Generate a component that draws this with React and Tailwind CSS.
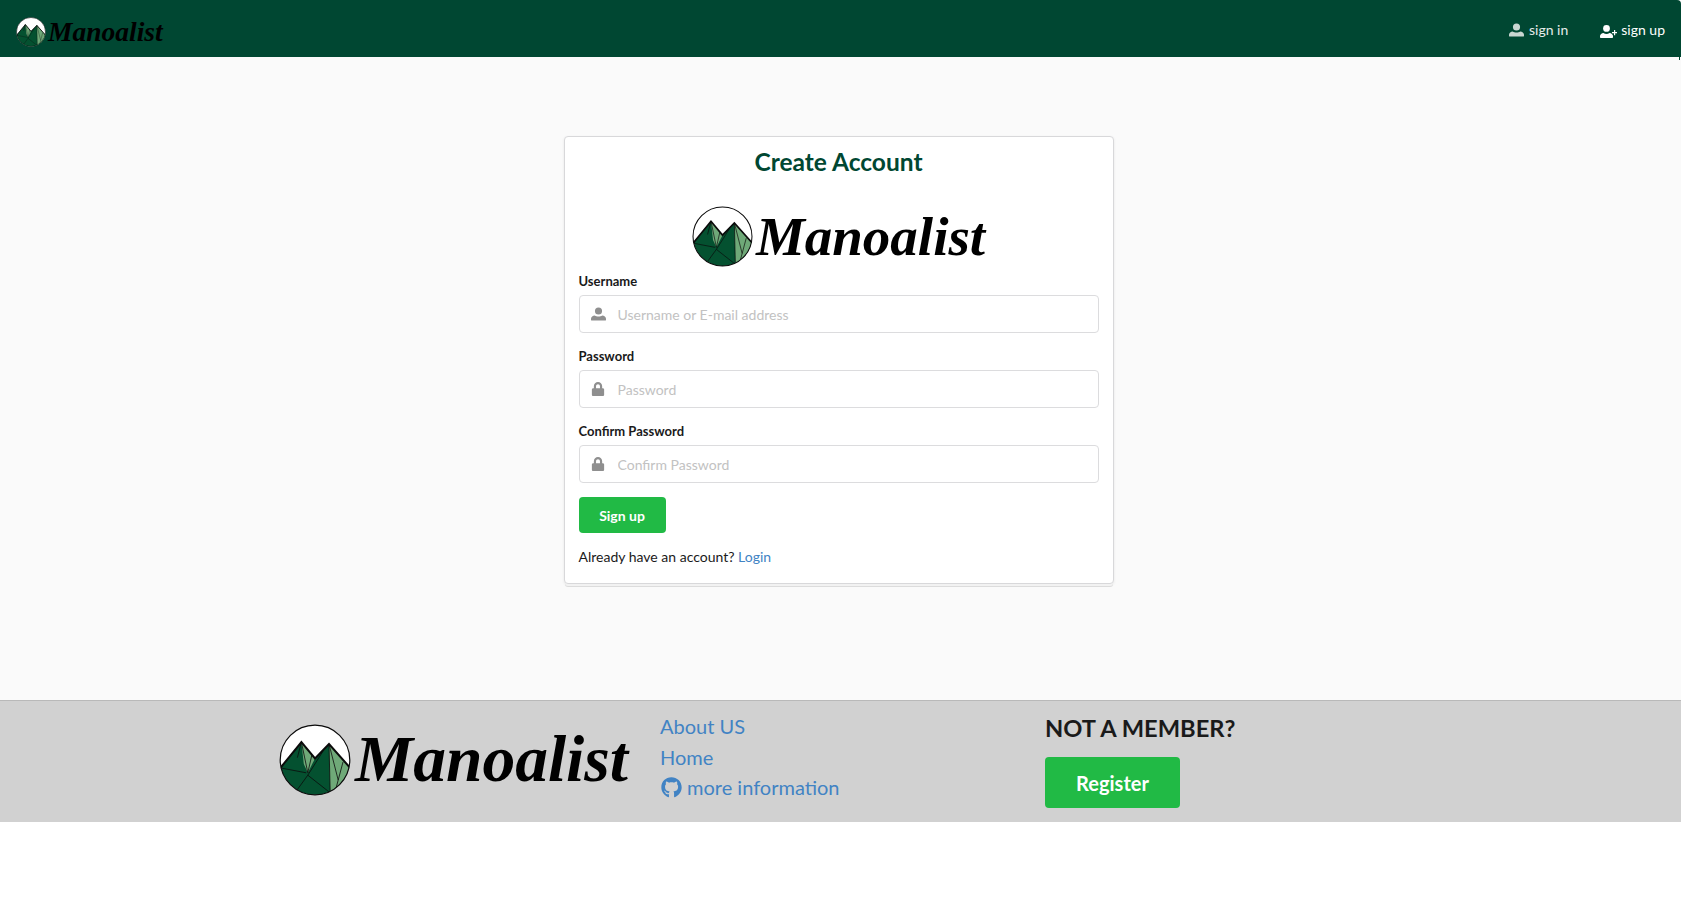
import { FaLock, FaGithub } from 'react-icons/fa';

function UserIcon({ className }) {
  return (
    <svg width="15" height="14" viewBox="0 0 16 14" fill="currentColor" className={className}>
      <circle cx="8" cy="3.8" r="3.8" />
      <path d="M1 14a1 1 0 0 1-1-1v-1c0-2 2-3.5 4-3.5 1 .8 2.5 1.2 4 1.2s3-.4 4-1.2c2 0 4 1.5 4 3.5v1a1 1 0 0 1-1 1z" />
    </svg>
  );
}

function UserPlusIcon({ className }) {
  return (
    <svg width="17" height="13" viewBox="0 0 17 13" fill="currentColor" className={className}>
      <circle cx="6.5" cy="3.4" r="3.4" />
      <path d="M.8 13a.8.8 0 0 1-.8-.8v-1.1c0-1.8 1.7-3.2 3.5-3.2.9.7 1.9 1 3 1s2.1-.3 3-1c1.8 0 3.5 1.4 3.5 3.2v1.1a.8.8 0 0 1-.8.8z" />
      <path d="M14 5v2h-2v1.2h2v2h1.2v-2H17V7h-1.8V5z" />
    </svg>
  );
}

function Mountains({ size }) {
  return (
    <svg width={size} height={size} viewBox="0 0 180 180" className="shrink-0">
      <defs>
        <clipPath id={`disc-${size}`}>
          <circle cx="90" cy="90" r="87" />
        </clipPath>
      </defs>
      <circle cx="90" cy="90" r="87" fill="#fff" />
      <g clipPath={`url(#disc-${size})`}>
        <path d="M56 45 L0 112 L0 180 L180 180 L180 112 L125 50 L90 86 Z" fill="#045130" />
        <path d="M56 45 L90 86 L72 122 L62 100 Z" fill="#6fa978" />
        <path d="M125 50 L180 112 L180 150 L128 172 Z" fill="#6fa978" />
        <g fill="none" stroke="#0b0b0b" strokeWidth="2">
          <path d="M56 45 L46 84 M56 45 L72 122 M82 78 L72 122 M5 110 L68 122 M40 172 L72 128 L128 172 M72 128 L110 68 M125 50 L128 172 M125 50 L148 140 M160 95 L140 170" />
        </g>
        <path d="M0 114 L56 45 L90 86 L125 50 L180 112" fill="none" stroke="#0b0b0b" strokeWidth="5" />
      </g>
      <circle cx="90" cy="90" r="87" fill="none" stroke="#0b0b0b" strokeWidth="3" />
    </svg>
  );
}

function Logo({ size, text, gap }) {
  return (
    <div className="flex items-center" style={{ gap }}>
      <Mountains size={size} />
      <span className={`font-['Liberation_Serif',serif] font-bold italic leading-none text-black ${text}`}>Manoalist</span>
    </div>
  );
}

function Field({ label, icon, placeholder, type = 'text' }) {
  return (
    <div className="mb-[14px]">
      <label className="block h-[19px] text-[13px] leading-[19px] font-bold text-[#1a1a1a]">{label}</label>
      <div className="relative mt-[4px]">
        <span className="absolute left-[12px] top-[12px] flex w-[15px] justify-center text-[14px] text-[#8f8f8f]">{icon}</span>
        <input
          type={type}
          placeholder={placeholder}
          className="block h-[38px] w-full rounded-[4px] border border-[#dcdcde] bg-white pl-[38px] pr-3 text-[14px] outline-none placeholder:text-[#c2c2c2]"
        />
      </div>
    </div>
  );
}

export default function App() {
  return (
    <div className="font-['Lato',sans-serif] text-[14px] text-[#1a1a1a]">
      {/* Navbar */}
      <nav className="relative flex h-[57px] items-center justify-between rounded-tr-[4px] bg-[#004732] pl-[16px] pr-[16px]">
        <div className="pt-[6px]">
          <Logo size={30} text="text-[27.5px]" gap={2} />
        </div>
        <div className="flex items-center gap-[32px] pt-[2px] text-[14px] text-white">
          <a className="flex items-center gap-[5px] text-[#e6ecea]">
            <UserIcon className="text-[#c9d6d1]" />
            sign in
          </a>
          <a className="flex items-center gap-[4px]">
            <UserPlusIcon className="mt-[3px]" />
            sign up
          </a>
        </div>
        <span className="absolute right-[1px] top-[57px] h-[3px] w-[1px] bg-[#004732]" />
      </nav>

      {/* Form */}
      <main className="h-[643px] bg-[#fafafa] pr-[4px] pt-[79px]">
        <div className="mx-auto w-[550px] rounded-[4px] border border-[#d8d8da] bg-white px-[14px] pb-[16px] shadow-[0_3px_0_-1px_#f2f2f2,0_4px_0_-1px_#dcdcdc,0_1px_3px_rgba(0,0,0,0.08)]">
          <h2 className="pt-[10px] text-center text-[24.5px] leading-[30px] font-bold text-[#004732]">Create Account</h2>
          <div className="mt-[24px] flex h-[71px] justify-center">
            <Logo size={61} text="text-[55px]" gap={3} />
          </div>
          <Field label="Username" icon={<UserIcon />} placeholder="Username or E-mail address" />
          <Field label="Password" icon={<FaLock />} placeholder="Password" type="password" />
          <Field label="Confirm Password" icon={<FaLock />} placeholder="Confirm Password" type="password" />
          <button className="h-[36px] w-[87px] rounded-[4px] bg-[#21ba45] text-[14px] font-bold text-white">Sign up</button>
          <p className="mt-[14px] text-[14px] leading-[20px]">
            Already have an account? <a className="text-[#4183c4]">Login</a>
          </p>
        </div>
      </main>

      {/* Footer */}
      <footer className="grid h-[122px] grid-cols-[381px_385px_auto] border-t border-[#b9b9b9] bg-[#d1d1d1] pl-[279px]">
        <div className="flex items-center pb-[4px]">
          <Logo size={72} text="text-[65.5px]" gap={4} />
        </div>
        <div className="flex flex-col pt-[10px] text-[20px] leading-[30.5px] text-[#4183c4]">
          <a>About US</a>
          <a>Home</a>
          <a className="flex items-center gap-[5px] pl-[1px]">
            <FaGithub size={21} />
            more information
          </a>
        </div>
        <div className="pt-[12px]">
          <h3 className="text-[23.7px] leading-[30px] font-bold text-[#1a1a1a]">NOT A MEMBER?</h3>
          <button className="mt-[14px] h-[51px] w-[135px] rounded-[4px] bg-[#21ba45] text-[20px] font-bold text-white">Register</button>
        </div>
      </footer>
    </div>
  );
}
